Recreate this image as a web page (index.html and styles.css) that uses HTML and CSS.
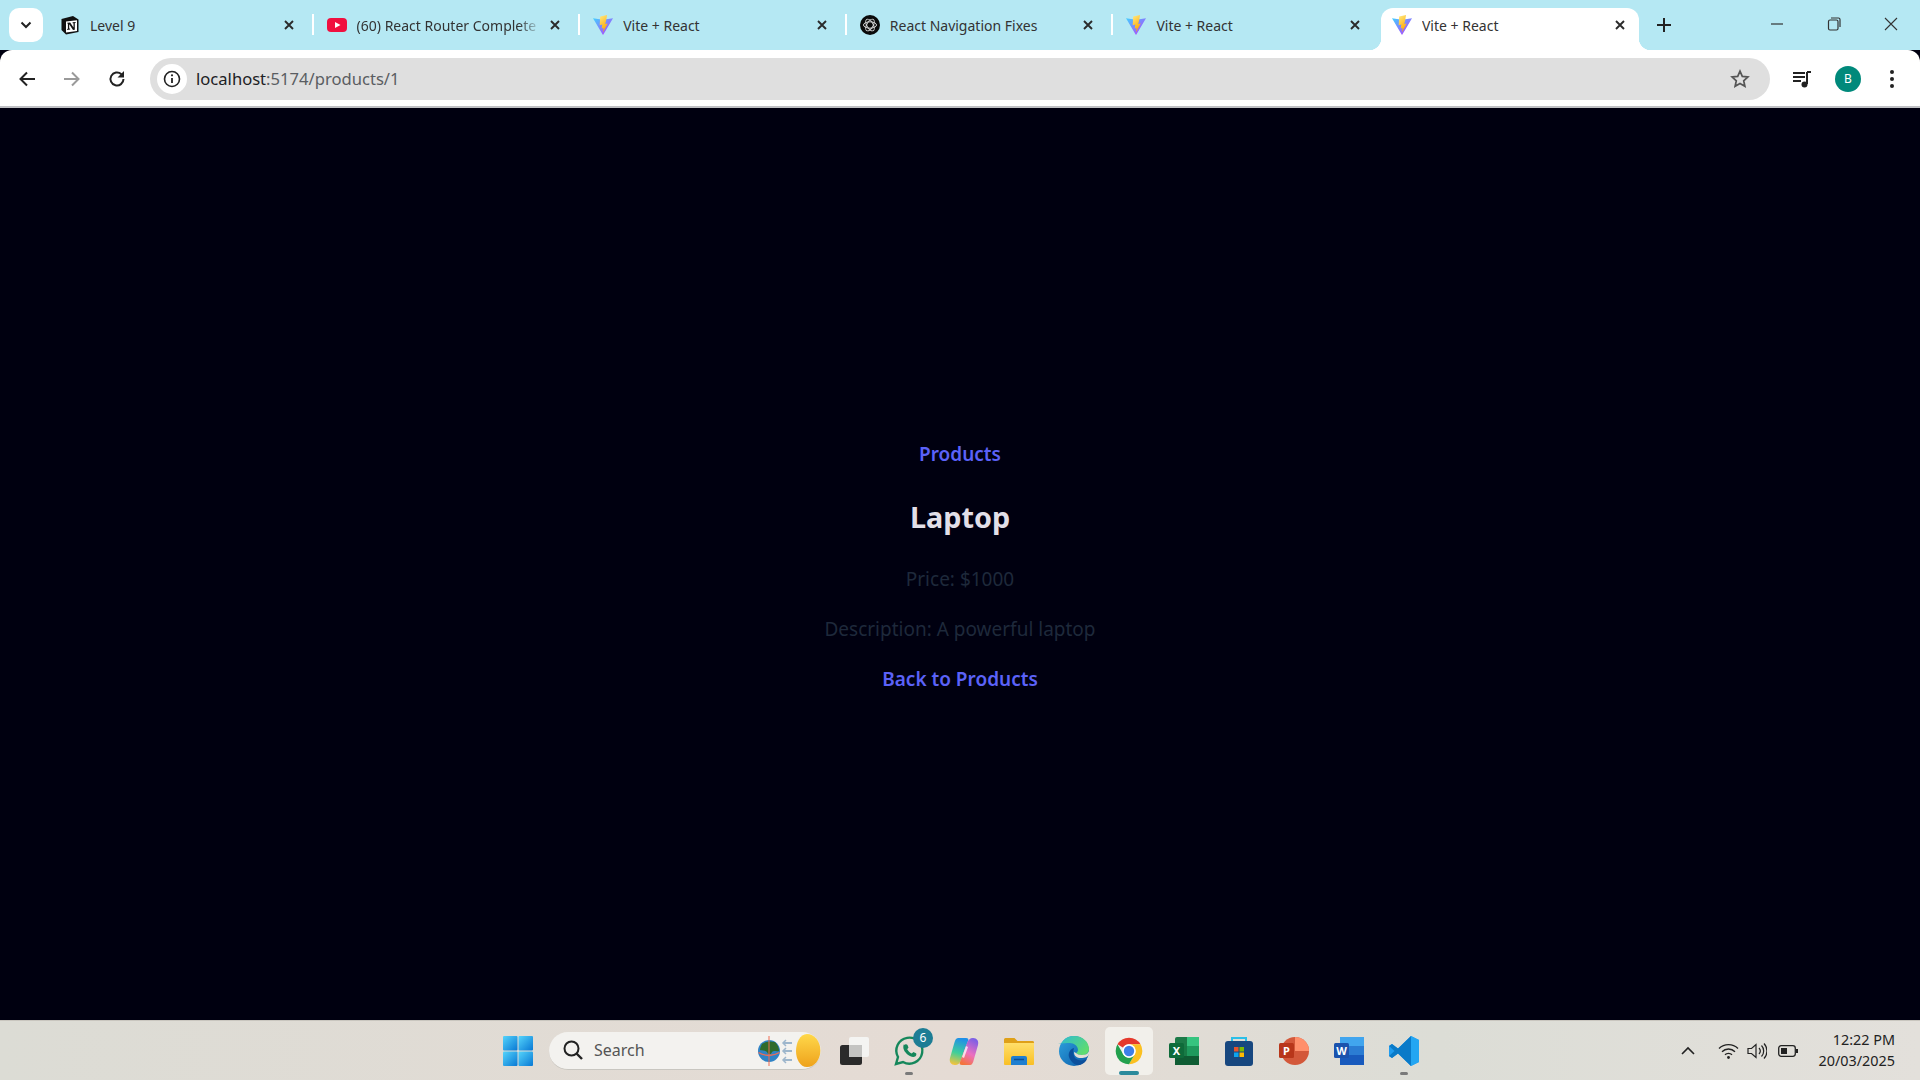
FILE: index.html
```html
<!DOCTYPE html>
<html lang="en">
<head>
  <meta charset="UTF-8">
  <title>Vite + React</title>
  <link rel="stylesheet" href="styles.css">
</head>
<body>
  <svg class="defs" aria-hidden="true">
    <defs>
      <linearGradient id="viteBody" x1="0" y1="0" x2="1" y2="1">
        <stop offset="0" stop-color="#41d1ff"/>
        <stop offset="1" stop-color="#bd34fe"/>
      </linearGradient>
      <linearGradient id="viteBolt" x1="0" y1="0" x2="0.4" y2="1">
        <stop offset="0" stop-color="#ffea83"/>
        <stop offset="1" stop-color="#ffa800"/>
      </linearGradient>
      <linearGradient id="winTile" x1="0" y1="0" x2="1" y2="1">
        <stop offset="0" stop-color="#55d4fb"/>
        <stop offset="1" stop-color="#0878d4"/>
      </linearGradient>
      <linearGradient id="edgeBlue" x1="0" y1="0" x2="1" y2="1">
        <stop offset="0" stop-color="#2fa3df"/>
        <stop offset="1" stop-color="#0b5aa8"/>
      </linearGradient>
      <linearGradient id="edgeGreen" x1="0" y1="0" x2="1" y2="0.6">
        <stop offset="0" stop-color="#2bb9d8"/>
        <stop offset="1" stop-color="#5fdc70"/>
      </linearGradient>
      <linearGradient id="sunFill" x1="0" y1="0" x2="0" y2="1">
        <stop offset="0" stop-color="#ffd84a"/>
        <stop offset="1" stop-color="#eea21c"/>
      </linearGradient>
      <linearGradient id="folderFill" x1="0" y1="0" x2="0" y2="1">
        <stop offset="0" stop-color="#ffdf6b"/>
        <stop offset="1" stop-color="#f9bf25"/>
      </linearGradient>
      <linearGradient id="copilotLeft" x1="0.5" y1="0" x2="0.3" y2="1">
        <stop offset="0" stop-color="#1f8fe8"/>
        <stop offset="0.55" stop-color="#3fcf9a"/>
        <stop offset="1" stop-color="#f6c33c"/>
      </linearGradient>
      <linearGradient id="copilotRight" x1="0.7" y1="0" x2="0.3" y2="1">
        <stop offset="0" stop-color="#7a5fe6"/>
        <stop offset="0.55" stop-color="#ec6fc0"/>
        <stop offset="1" stop-color="#f4743c"/>
      </linearGradient>
      <symbol id="vite" viewBox="0 0 32 32">
        <path d="M0 5l16 2.600L32 5 16.600 31a.7.7 0 0 1-1.200 0z" fill="url(#viteBody)"/>
        <path d="M22.500 0l-11 2.200-.8 14 4.200-.9-1 6.400 3.100-.8-1 6.600 7.500-14-4 .8 1.400-5z" fill="url(#viteBolt)"/>
      </symbol>
      <symbol id="cross" viewBox="0 0 12 12">
        <path d="M2 2l8 8M10 2l-8 8" stroke="#2b2b2b" stroke-width="1.900" fill="none"/>
      </symbol>
    </defs>
  </svg>

  <header class="tabstrip">
    <button class="tab-search">
      <svg width="12" height="8" viewBox="0 0 12 8"><path d="M1.500 1.500L6 6l4.500-4.500" stroke="#222" stroke-width="2" fill="none"/></svg>
    </button>
    <div class="tabs">
      <div class="tab">
        <svg class="favicon" viewBox="0 0 20 20">
          <path d="M1.500 4L13 1l5.500 3.500V17L6 19.500 1.500 15z" fill="#111"/>
          <path d="M6 6.500l11-1.200v10.800L6 17.500z" fill="#fff"/>
          <path d="M7.200 7.800l3-.3 3.300 5V8.300l-.9-.1v-.9l3-.3v.9l-.8.200v6.600l-1.800.3-3.800-5.800v4.300l1 .2v.9l-3 .3v-.9l.7-.2V8.600l-.7-.1z" fill="#111"/>
        </svg>
        <span class="tab-title">Level 9</span>
        <svg class="tab-close"><use href="#cross"/></svg>
      </div>
      <div class="tab">
        <svg class="favicon" viewBox="0 0 20 20">
          <rect x="0" y="3" width="20" height="14" rx="4" fill="#f0103f"/>
          <path d="M8 7l5.500 3L8 13z" fill="#fff"/>
        </svg>
        <span class="tab-title tab-title-fade">(60) React Router Complete</span>
        <svg class="tab-close"><use href="#cross"/></svg>
      </div>
      <div class="tab">
        <svg class="favicon"><use href="#vite"/></svg>
        <span class="tab-title">Vite + React</span>
        <svg class="tab-close"><use href="#cross"/></svg>
      </div>
      <div class="tab">
        <svg class="favicon" viewBox="0 0 20 20">
          <circle cx="10" cy="10" r="10" fill="#0b0b0b"/>
          <g fill="none" stroke="#d8d8d8" stroke-width="1">
            <ellipse cx="10" cy="10" rx="6.500" ry="3.200"/>
            <ellipse cx="10" cy="10" rx="6.500" ry="3.200" transform="rotate(60 10 10)"/>
            <ellipse cx="10" cy="10" rx="6.500" ry="3.200" transform="rotate(120 10 10)"/>
          </g>
        </svg>
        <span class="tab-title">React Navigation Fixes</span>
        <svg class="tab-close"><use href="#cross"/></svg>
      </div>
      <div class="tab tab-before-active">
        <svg class="favicon"><use href="#vite"/></svg>
        <span class="tab-title">Vite + React</span>
        <svg class="tab-close"><use href="#cross"/></svg>
      </div>
      <div class="tab tab-active">
        <svg class="favicon"><use href="#vite"/></svg>
        <span class="tab-title">Vite + React</span>
        <svg class="tab-close"><use href="#cross"/></svg>
      </div>
    </div>
    <svg class="new-tab" width="14" height="14" viewBox="0 0 14 14"><path d="M7 0v14M0 7h14" stroke="#222" stroke-width="2"/></svg>
    <div class="window-controls">
      <svg width="14" height="14" viewBox="0 0 14 14"><path d="M1 7h12" stroke="#333" stroke-width="1.200"/></svg>
      <svg width="14" height="14" viewBox="0 0 14 14"><rect x="1.500" y="3" width="9.500" height="10" rx="1.500" fill="none" stroke="#333" stroke-width="1.200"/><path d="M4 1h7.500A1.500 1.500 0 0 1 13 2.500V10" fill="none" stroke="#333" stroke-width="1.200"/></svg>
      <svg width="14" height="14" viewBox="0 0 14 14"><path d="M1 1l12 12M13 1L1 13" stroke="#333" stroke-width="1.100"/></svg>
    </div>
  </header>

  <nav class="toolbar">
    <div class="nav-buttons">
      <svg width="18" height="18" viewBox="0 0 18 18"><path d="M17 9H3M9 2.500L2.500 9 9 15.500" stroke="#222" stroke-width="2" fill="none"/></svg>
      <svg width="18" height="18" viewBox="0 0 18 18"><path d="M1 9h14M9 2.500L15.500 9 9 15.500" stroke="#9a9a9a" stroke-width="2" fill="none"/></svg>
      <svg width="18" height="18" viewBox="0 0 18 18"><path d="M15.500 9A6.500 6.500 0 1 1 13.400 4.200" stroke="#222" stroke-width="2" fill="none"/><path d="M16 1v6.500H9.500z" fill="#222"/></svg>
    </div>
    <div class="omnibox">
      <span class="site-info">
        <svg width="18" height="18" viewBox="0 0 18 18"><circle cx="9" cy="9" r="7.500" fill="none" stroke="#222" stroke-width="1.600"/><path d="M9 8v5" stroke="#222" stroke-width="1.800"/><circle cx="9" cy="5.300" r="1.100" fill="#222"/></svg>
      </span>
      <span class="url"><span class="url-host">localhost</span>:5174/products/1</span>
      <svg class="star" width="20" height="20" viewBox="0 0 20 20"><path d="M10 2.200l2.300 5.200 5.600.6-4.200 3.800 1.200 5.500L10 14.500l-4.900 2.800 1.200-5.500L2.100 8l5.600-.6z" fill="none" stroke="#555" stroke-width="1.700"/></svg>
    </div>
    <div class="toolbar-actions">
      <svg width="20" height="20" viewBox="0 0 20 20"><path d="M1 4h12M1 8h12M1 12h8" stroke="#222" stroke-width="2"/><path d="M15 3h4M15 3v12" stroke="#222" stroke-width="2" fill="none"/><circle cx="12.500" cy="15.500" r="3" fill="#222"/></svg>
      <span class="avatar">B</span>
      <svg class="menu-dots" width="6" height="20" viewBox="0 0 6 20"><circle cx="3" cy="3" r="2" fill="#222"/><circle cx="3" cy="10" r="2" fill="#222"/><circle cx="3" cy="17" r="2" fill="#222"/></svg>
    </div>
  </nav>

  <main class="page">
    <a class="link" href="#">Products</a>
    <h1 class="product-name">Laptop</h1>
    <p class="product-line">Price: $1000</p>
    <p class="product-line">Description: A powerful laptop</p>
    <a class="link" href="#">Back to Products</a>
  </main>

  <footer class="taskbar">
    <div class="task">
      <svg width="30" height="30" viewBox="0 0 30 30">
        <rect width="14.500" height="14.500" x="0" y="0" rx="1" fill="url(#winTile)"/>
        <rect width="14.500" height="14.500" x="15.500" y="0" rx="1" fill="url(#winTile)"/>
        <rect width="14.500" height="14.500" x="0" y="15.500" rx="1" fill="url(#winTile)"/>
        <rect width="14.500" height="14.500" x="15.500" y="15.500" rx="1" fill="url(#winTile)"/>
      </svg>
    </div>
    <div class="searchbox">
      <svg width="22" height="22" viewBox="0 0 22 22"><circle cx="9.500" cy="9.500" r="7" fill="none" stroke="#222" stroke-width="2"/><path d="M14.500 14.500L20 20" stroke="#222" stroke-width="2.400"/></svg>
      <span class="search-label">Search</span>
      <svg class="search-art" width="64" height="38" viewBox="0 0 64 38">
        <circle cx="12" cy="20" r="11" fill="#2f83c6"/>
        <path d="M5 13c4-3 9-3 13-2 3 3 4 6 4 9-3 1-5-1-7 1-1 3-4 3-5 0-2-2-5-1-7-2 0-2 1-4 2-6z" fill="#2f6b2b"/>
        <path d="M1.500 21.500q10.500 6 21 0" fill="none" stroke="#ef6c53" stroke-width="1.300"/>
        <path d="M12 5v30" stroke="#ef6c53" stroke-width="1"/>
        <path d="M35 12h-8M35 20h-8M35 29h-8" stroke="#9db6cc" stroke-width="2"/>
        <path d="M29 9l-3 3 3 3M29 17l-3 3 3 3M29 26l-3 3 3 3" stroke="#9db6cc" stroke-width="1.500" fill="none"/>
        <path d="M50 3a13 16 0 0 1 0 33c-7 0-11-8-11-16s4-17 11-17z" fill="url(#sunFill)"/>
      </svg>
    </div>
    <div class="task">
      <svg width="32" height="32" viewBox="0 0 32 32">
        <rect x="11" y="2" width="20" height="20" rx="2" fill="#f4f4f2"/>
        <rect x="2" y="10" width="22" height="20" rx="2.500" fill="#2a2a2a"/>
        <rect x="11" y="10" width="13" height="12" fill="#c4c4c2"/>
      </svg>
    </div>
    <div class="task">
      <svg width="32" height="32" viewBox="0 0 32 32">
        <path d="M3 29l2-7A13 13 0 1 1 10 27z" fill="none" stroke="#15875b" stroke-width="2.400"/>
        <path d="M11 10c1-1 3-1 3.500 0l1 2.500-1.300 1.800c1 2 2.500 3.300 4.500 4.200l1.800-1.500 2.500 1.200c.6.400.5 2-.5 3-2 1.500-5 .6-8-1.700-3-2.500-5.500-6.500-3.500-10.500z" fill="#15875b"/>
      </svg>
      <span class="badge">6</span>
      <span class="task-dot"></span>
    </div>
    <div class="task">
      <svg width="32" height="32" viewBox="0 0 32 32">
        <path d="M10 3h8c2 0 3 1 2 3l-7 19c-1 3-3 5-6 5-4 0-6-3-5-7L6 9c1-4 2-6 4-6z" fill="url(#copilotLeft)"/>
        <path d="M22 30h-8c-2 0-3-1-2-3l7-19c1-3 3-5 6-5 4 0 6 3 5 7l-4 14c-1 4-2 6-4 6z" fill="url(#copilotRight)"/>
        <path d="M18 11l-4 11 2 1 4-11z" fill="#fff" opacity="0.75"/>
      </svg>
    </div>
    <div class="task">
      <svg width="32" height="32" viewBox="0 0 32 32">
        <path d="M1 4.500A1.500 1.500 0 0 1 2.500 3h9l3 3h15A1.500 1.500 0 0 1 31 7.500V12H1z" fill="#dfa018"/>
        <path d="M1 8h30v21a1 1 0 0 1-1 1H2a1 1 0 0 1-1-1z" fill="url(#folderFill)"/>
        <path d="M8 30v-7a2 2 0 0 1 2-2h12a2 2 0 0 1 2 2v7z" fill="#1f7fd0"/>
        <path d="M11 24.500h10" stroke="#0d4f94" stroke-width="1.500"/>
      </svg>
    </div>
    <div class="task">
      <svg width="32" height="32" viewBox="0 0 32 32">
        <circle cx="16" cy="16" r="15" fill="url(#edgeBlue)"/>
        <path d="M3 9C6 3 11 1 16 1c9 0 15 6 15 13 0 4-3 6-7 6-3 0-5-1-6-2 0 0 2-1 2-3 0-4-4-7-8-7-4 0-8 0-12 1z" fill="url(#edgeGreen)"/>
        <path d="M31 19c-1 3-4 4-8 4-4 0-7-2-7-6l2 1c1 1 3 2 6 2 3 0 6-1 7-4z" fill="#e6dfd6"/>
        <path d="M16 13c-4 1-6 5-5 9 2 5 6 9 11 8 3-1 6-3 7-6-4 2-9 2-12-1-2-3-2-7-1-10z" fill="#0b4f9c"/>
      </svg>
    </div>
    <div class="task task-active">
      <svg width="32" height="32" viewBox="0 0 24 24">
        <path d="M12 2a10 10 0 0 1 8.660 5H12a5 5 0 0 0-4.330 2.500L3.340 7A10 10 0 0 1 12 2z" fill="#e5392d"/>
        <path d="M20.660 7A10 10 0 0 1 12 22l4.330-7.500A5 5 0 0 0 12 7z" fill="#fbc021"/>
        <path d="M3.340 7A10 10 0 0 0 12 22l4.330-7.500a5 5 0 0 1-8.660 0z" fill="#23a04d"/>
        <circle cx="12" cy="12" r="5" fill="#fff"/>
        <circle cx="12" cy="12" r="3.900" fill="#3d7fe8"/>
      </svg>
      <span class="task-bar"></span>
    </div>
    <div class="task">
      <svg width="32" height="32" viewBox="0 0 32 32">
        <rect x="7" y="2" width="24" height="28" rx="2" fill="#1d7a48"/>
        <rect x="19" y="2" width="12" height="9" fill="#36c47f"/>
        <rect x="19" y="11" width="12" height="10" fill="#1f9a5d"/>
        <rect x="7" y="11" width="12" height="10" fill="#187a45"/>
        <rect x="7" y="21" width="24" height="9" fill="#0f5c33"/>
        <rect x="1" y="8" width="15" height="15" rx="1.500" fill="#0e6b3a"/>
        <text class="tile-letter" x="8.500" y="20" text-anchor="middle">X</text>
      </svg>
    </div>
    <div class="task">
      <svg width="32" height="32" viewBox="0 0 32 32">
        <path d="M9 7V3h14v4" fill="none" stroke="#2bbfe8" stroke-width="2"/>
        <rect x="2" y="6" width="28" height="25" rx="3" fill="#17477f"/>
        <rect x="11" y="12" width="4.500" height="4.500" fill="#e7552c"/>
        <rect x="16.500" y="12" width="4.500" height="4.500" fill="#7fb900"/>
        <rect x="11" y="17.500" width="4.500" height="4.500" fill="#0ca4ef"/>
        <rect x="16.500" y="17.500" width="4.500" height="4.500" fill="#ffb900"/>
      </svg>
    </div>
    <div class="task">
      <svg width="32" height="32" viewBox="0 0 32 32">
        <circle cx="17" cy="16" r="14" fill="#d3583a"/>
        <path d="M17 2a14 14 0 0 1 14 14H17z" fill="#ff8f6b"/>
        <rect x="1" y="8" width="15" height="15" rx="1.500" fill="#b8361a"/>
        <text class="tile-letter" x="8.500" y="20" text-anchor="middle">P</text>
      </svg>
    </div>
    <div class="task">
      <svg width="32" height="32" viewBox="0 0 32 32">
        <rect x="7" y="2" width="24" height="28" rx="2" fill="#2b7cd3"/>
        <rect x="7" y="2" width="24" height="9" fill="#41a5ee"/>
        <rect x="7" y="20" width="24" height="10" fill="#185abd"/>
        <rect x="1" y="8" width="15" height="15" rx="1.500" fill="#1a52ad"/>
        <text class="tile-letter" x="8.500" y="20" text-anchor="middle">W</text>
      </svg>
    </div>
    <div class="task">
      <svg width="32" height="32" viewBox="0 0 32 32">
        <path d="M23 1l8 4v22l-8 4-13-12.500L4 23l-3-2V11l3-2 6 4.500z" fill="#1f9cf0"/>
        <path d="M23 9l-9 7 9 7z" fill="#f1efe9"/>
        <path d="M23 1L10 13.500 4 9l-3 2 5.500 5L1 21l3 2 6-4.500L23 31z" fill="#0a7ac8"/>
        <path d="M23 1l8 4v22l-8 4z" fill="#24a6f2"/>
      </svg>
      <span class="task-dot"></span>
    </div>

    <div class="tray">
      <svg width="14" height="9" viewBox="0 0 14 9"><path d="M1 8l6-6 6 6" stroke="#222" stroke-width="1.600" fill="none"/></svg>
      <svg class="tray-wifi" width="21" height="16" viewBox="0 0 21 16"><path d="M1 5.500a13.500 13.500 0 0 1 19 0M4 8.800a9 9 0 0 1 13 0M7 11.800a4.800 4.800 0 0 1 7 0" stroke="#222" stroke-width="1.300" fill="none"/><circle cx="10.500" cy="14.500" r="1.400" fill="#222"/></svg>
      <svg width="20" height="18" viewBox="0 0 20 18"><path d="M1 6.500h3.500L9 2.500v13l-4.500-4H1z" fill="none" stroke="#222" stroke-width="1.200"/><path d="M12 6a4.500 4.500 0 0 1 0 6M14.500 3.500a8 8 0 0 1 0 11M17 1.500a11 11 0 0 1 0 15" stroke="#222" stroke-width="1.200" fill="none"/></svg>
      <svg class="tray-battery" width="20" height="12" viewBox="0 0 20 12"><rect x=".7" y=".7" width="16.600" height="10.600" rx="2.500" fill="none" stroke="#222" stroke-width="1.300"/><rect x="3" y="3" width="6" height="6" fill="#222"/><rect x="18" y="4" width="2" height="4" fill="#222"/></svg>
      <div class="clock">
        <span>12:22 PM</span>
        <span>20/03/2025</span>
      </div>
    </div>
  </footer>
</body>
</html>
```

FILE: styles.css
```css
* {
  box-sizing: border-box;
}

html,
body {
  height: 100%;
}

body {
  margin: 0;
  display: flex;
  flex-direction: column;
  overflow: hidden;
  background-color: #000010;
  font-family: "Noto Sans", "Open Sans", sans-serif;
}

.defs {
  position: absolute;
  width: 0;
  height: 0;
}

/* tab strip */
.tabstrip {
  height: 50px;
  flex-shrink: 0;
  display: flex;
  align-items: flex-start;
  padding-left: 9px;
  background-color: #b5e8f3;
}

.tab-search {
  width: 34px;
  height: 34px;
  margin-top: 8px;
  padding: 0;
  border: none;
  border-radius: 10px;
  background-color: #fff;
  display: flex;
  align-items: center;
  justify-content: center;
}

.tabs {
  display: flex;
  margin-left: 3px;
}

.tab {
  position: relative;
  width: 266.6px;
  height: 42px;
  margin-top: 8px;
  padding: 0 18px 8px 15px;
  display: flex;
  align-items: center;
  font-size: 14px;
  color: #333;
}

.tab::after {
  content: "";
  position: absolute;
  right: -1px;
  top: 6px;
  width: 2px;
  height: 21px;
  background-color: #fff;
}

.tab-before-active::after,
.tab-active::after {
  display: none;
}

.tab-active {
  width: 258px;
  margin-left: 2px;
  padding: 0 13px 8px 12px;
  background-color: #fff;
  border-radius: 12px 12px 0 0;
}

.tab-active::before {
  content: "";
  position: absolute;
  left: -12px;
  right: -12px;
  bottom: 0;
  height: 12px;
  background:
    radial-gradient(circle at 0 0, #b5e8f3 12px, #fff 12.5px) left / 12px 12px no-repeat,
    radial-gradient(circle at 100% 0, #b5e8f3 12px, #fff 12.5px) right / 12px 12px no-repeat;
}

.favicon {
  width: 20px;
  height: 20px;
  margin-left: -1px;
  flex-shrink: 0;
}

.tab-title {
  flex: 1;
  min-width: 0;
  margin-left: 10px;
  white-space: nowrap;
  overflow: hidden;
}

.tab-title-fade {
  margin-right: 8px;
  -webkit-mask-image: linear-gradient(to right, #000 88%, transparent);
  mask-image: linear-gradient(to right, #000 88%, transparent);
}

.tab-close {
  width: 12px;
  height: 12px;
  flex-shrink: 0;
}

.new-tab {
  margin: 18px 0 0 18px;
}

.window-controls {
  margin-left: auto;
  margin-top: 17px;
  padding-right: 22px;
  display: flex;
  gap: 43px;
}

/* toolbar */
.toolbar {
  height: 58px;
  flex-shrink: 0;
  display: flex;
  align-items: center;
  padding-top: 1px;
  background-color: #fff;
  border-radius: 12px 12px 0 0;
  border-bottom: 2px solid #bfc0c4;
}

.nav-buttons {
  width: 150px;
  padding-left: 18px;
  display: flex;
  gap: 27px;
}

.omnibox {
  width: 1620px;
  height: 42px;
  display: flex;
  align-items: center;
  padding: 0 20px 0 7px;
  border-radius: 21px;
  background-color: #dfdfdf;
}

.site-info {
  width: 30px;
  height: 30px;
  border-radius: 50%;
  background-color: #fff;
  display: flex;
  align-items: center;
  justify-content: center;
}

.url {
  margin-left: 9px;
  font-size: 16.6px;
  color: #5a5d62;
}

.url-host {
  color: #202124;
}

.star {
  margin-left: auto;
}

.toolbar-actions {
  flex: 1;
  padding-left: 22px;
  display: flex;
  align-items: center;
  gap: 23px;
}

.avatar {
  width: 26px;
  height: 26px;
  border-radius: 50%;
  background-color: #00897b;
  color: #fff;
  font-size: 12px;
  display: flex;
  align-items: center;
  justify-content: center;
}

.menu-dots {
  margin-left: 5px;
}

/* page */
.page {
  flex: 1;
  display: flex;
  flex-direction: column;
  align-items: center;
  justify-content: center;
  padding-top: 4px;
}

.link {
  height: 24px;
  line-height: 24px;
  font-size: 19px;
  font-weight: 600;
  color: #5b62f8;
  text-decoration: none;
}

.product-name {
  margin: 31px 0 30px;
  height: 40px;
  line-height: 40px;
  font-size: 28.8px;
  font-weight: 700;
  color: #e2dfe8;
}

.product-line {
  margin: 0 0 25px;
  height: 25px;
  line-height: 25px;
  font-size: 19px;
  color: #1e293b;
}

/* taskbar */
.taskbar {
  height: 60px;
  flex-shrink: 0;
  display: flex;
  align-items: center;
  padding-left: 490px;
  background: linear-gradient(to right, #dcdcd5, #e5dbd4 50%, #dcddd6 75%, #e3e0db);
  border-top: 1px solid #c9c6bf;
}

.task {
  position: relative;
  width: 55px;
  height: 48px;
  display: flex;
  align-items: center;
  justify-content: center;
}

.task-active {
  width: 48px;
  margin: 0 3.5px;
  background-color: #f2f0eb;
  border-radius: 5px;
}

.task-dot {
  position: absolute;
  left: 50%;
  bottom: 0;
  width: 8px;
  height: 3px;
  margin-left: -4px;
  border-radius: 2px;
  background-color: #7a7a7a;
}

.task-bar {
  position: absolute;
  left: 50%;
  bottom: 0;
  width: 20px;
  height: 4px;
  margin-left: -10px;
  border-radius: 2px;
  background-color: #2b8a9c;
}

.badge {
  position: absolute;
  top: 1px;
  right: 3px;
  width: 20px;
  height: 20px;
  border-radius: 50%;
  background-color: #1d7d95;
  color: #fff;
  font-size: 12px;
  display: flex;
  align-items: center;
  justify-content: center;
}

.searchbox {
  width: 272px;
  height: 38px;
  margin: 0 5px 0 4px;
  padding: 0 0 0 13px;
  display: flex;
  align-items: center;
  border-radius: 19px;
  background-color: #f3f2ef;
  border-bottom: 1px solid #c8c6c0;
}

.search-label {
  margin-left: 10px;
  font-size: 16px;
  color: #555;
}

.search-art {
  margin-left: auto;
}

.tile-letter {
  font-size: 11px;
  font-weight: 700;
  fill: #fff;
}

.tray {
  margin-left: auto;
  padding-right: 25px;
  display: flex;
  align-items: center;
}

.tray-wifi {
  margin-left: 23px;
  margin-right: 8px;
}

.tray-battery {
  margin-left: 11px;
}

.clock {
  margin-left: 20px;
  display: flex;
  flex-direction: column;
  align-items: flex-end;
  font-size: 14.4px;
  line-height: 21px;
  color: #222;
  padding-bottom: 2px;
}
```
